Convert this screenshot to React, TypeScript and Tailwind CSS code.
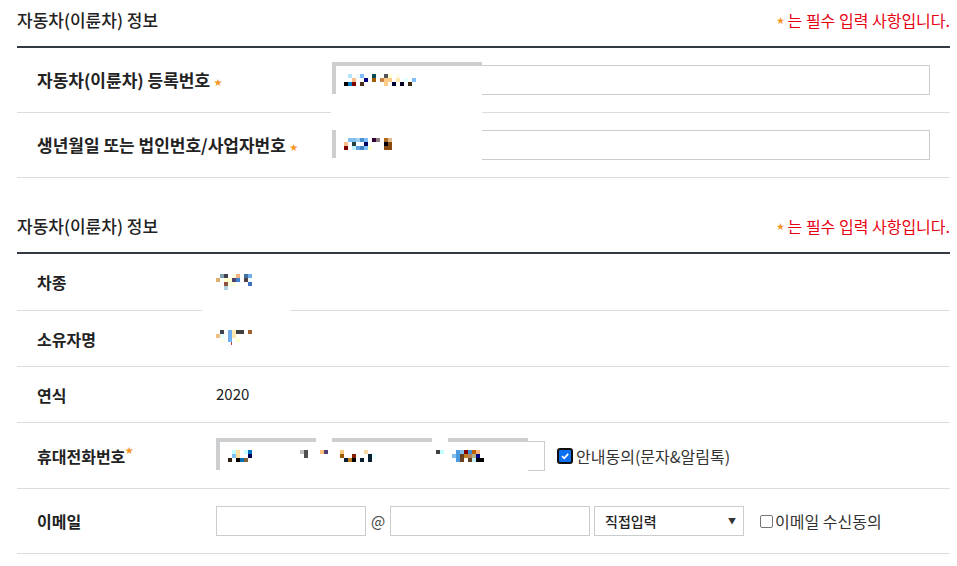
import React from "react";

type Cell = [number, number, string];

// pixelated (masked) personal data, 4px cells
const Pixels = ({ x, y, cells }: { x: number; y: number; cells: Cell[] }) => (
  <>
    {cells.map(([c, r, color], i) => (
      <rect key={i} x={x + c * 4} y={y + r * 4} width={4} height={4} fill={color} />
    ))}
  </>
);

const regCells: Cell[] = [
  [1, 0, "#b3e5fc"], [3, 0, "#eef8ff"], [4, 0, "#7fbfff"], [7, 0, "#0a4a55"], [10, 0, "#555555"], [11, 0, "#ffffd0"], [13, 0, "#fffbe8"],
  [2, 1, "#f5c08a"], [5, 1, "#000080"], [7, 1, "#a05a00"], [9, 1, "#c8843c"], [10, 1, "#ffcc88"], [11, 1, "#ffcc88"], [13, 1, "#ffe8b0"], [15, 1, "#e0ffff"], [17, 1, "#80c0ff"],
  [0, 2, "#000000"], [1, 2, "#0080c0"], [2, 2, "#800000"], [4, 2, "#4a3020"], [10, 2, "#ffcc88"], [12, 2, "#000030"], [14, 2, "#000020"], [16, 2, "#3a2a10"],
];

const birthCells: Cell[] = [
  [1, 0, "#80c0f0"], [2, 0, "#80c0f0"], [3, 0, "#a0d0f0"], [4, 0, "#4a90d0"], [5, 0, "#80c0ff"], [7, 0, "#300030"], [8, 0, "#908080"], [10, 0, "#b06a20"], [11, 0, "#e0c090"],
  [0, 1, "#f5c08a"], [2, 1, "#204040"], [5, 1, "#000060"], [10, 1, "#000010"], [11, 1, "#8a4a10"],
  [0, 2, "#800000"], [2, 2, "#c0f0ff"], [3, 2, "#60a0e0"], [4, 2, "#4080c0"], [5, 2, "#80c0ff"], [6, 2, "#ffffd0"], [10, 2, "#8a4a10"], [11, 2, "#8a4a10"],
];

const carCells: Cell[] = [
  [1, 0, "#80a0b0"], [2, 0, "#404050"], [4, 0, "#ffffe0"], [5, 0, "#f0b080"], [7, 0, "#4070a0"], [8, 0, "#70b0f0"],
  [0, 1, "#e0b070"], [2, 1, "#ffffd0"], [3, 1, "#ffffd0"], [4, 1, "#504070"], [5, 1, "#4080d0"], [7, 1, "#504040"], [8, 1, "#f0ffff"],
  [2, 2, "#905040"], [3, 2, "#ffffe0"], [4, 2, "#ffffe0"], [8, 2, "#4070c0"],
  [2, 3, "#b0d0e0"],
];

const ownerCells: Cell[] = [
  [1, 0, "#404050"], [3, 0, "#70b0f0"], [4, 0, "#ffe8b0"], [5, 0, "#404040"], [6, 0, "#404040"], [8, 0, "#a06030"],
  [0, 1, "#f0c080"], [1, 1, "#e0ffff"], [3, 1, "#70b0f0"], [4, 1, "#ffe8b0"],
  [1, 2, "#fffff0"], [3, 2, "#70b0f0"], [5, 2, "#ffffd0"],
];

const phoneCells: Cell[] = [
  [4, 0, "#c0ffff"], [5, 0, "#ffe0a0"], [7, 0, "#c0ffff"], [8, 0, "#0070c0"],
  [4, 1, "#80c0f0"], [5, 1, "#ffe0a0"], [8, 1, "#000050"],
  [3, 2, "#302010"], [5, 2, "#000000"], [6, 2, "#0070b0"], [7, 2, "#806040"],
  [21, 0, "#c0c0c0"], [22, 0, "#505050"], [22, 1, "#505050"],
  [26, 0, "#ffc080"], [27, 0, "#504070"],
  [31, 0, "#f8c880"], [31, 1, "#a05a00"], [32, 2, "#0a2030"], [33, 2, "#c08020"], [34, 1, "#802000"], [34, 2, "#000000"],
  [36, 2, "#0a2030"], [37, 0, "#f8d8a0"], [38, 1, "#0a2030"], [38, 2, "#0a2030"], [39, 1, "#eaffff"],
  [55, 0, "#404040"], [56, 0, "#c0ffff"],
  [59, 1, "#80c0f0"], [60, 0, "#4a9ae0"], [60, 1, "#4a9ae0"], [60, 2, "#4a9ae0"], [61, 0, "#80c0f0"], [61, 1, "#6a4020"], [61, 2, "#6a4020"],
  [62, 0, "#800000"], [62, 1, "#c08020"], [63, 0, "#4090d0"], [63, 1, "#b08060"], [63, 2, "#604020"],
  [64, 0, "#c06000"], [64, 1, "#b0b080"], [64, 2, "#c0f0ff"], [65, 0, "#f8b880"], [65, 1, "#000080"], [65, 2, "#000000"], [66, 2, "#000000"],
];

const Star = () => <span className="text-[8px] text-[#f7941d] align-middle">★</span>;

const SectionHead = ({ top }: { top: string }) => (
  <div className={`flex justify-between items-start ${top}`}>
    <h2 className="text-[17px] leading-[24px] font-medium text-[#222]">자동차(이륜차) 정보</h2>
    <p className="text-[16px] leading-[24px] text-[#e60012] flex items-center gap-[3px]">
      <Star />
      는 필수 입력 사항입니다.
    </p>
  </div>
);

const Input = ({ className }: { className: string }) => (
  <div className={`h-[30px] border border-[#cccccc] bg-white ${className}`} />
);

export default function App() {
  return (
    <div
      className="w-[957px] h-[566px] bg-white overflow-hidden text-[#222]"
      style={{ fontFamily: '"Noto Sans CJK KR", "Noto Sans", sans-serif' }}
    >
      <div className="ml-[17px] w-[933px]">
        <div className="h-[46px]">
          <SectionHead top="pt-[8px]" />
        </div>
        <div className="h-[2px] bg-[#343a44]" />

        {/* 등록 정보 */}
        <div className="relative">
          <div className="h-[65px] flex items-center border-b border-[#dddddd]">
            <div className="w-[314px] pl-[20px] text-[17px] font-bold">
              자동차(이륜차) 등록번호 <Star />
            </div>
            <Input className="w-[599px]" />
          </div>
          <div className="h-[65px] flex items-center border-b border-[#dddddd]">
            <div className="w-[314px] pl-[20px] text-[17px] font-bold">
              생년월일 또는 법인번호/사업자번호 <Star />
            </div>
            <Input className="w-[599px]" />
          </div>
          <svg className="absolute left-[314px] top-[14px]" width="151" height="114">
            <rect x="0" y="0" width="151" height="114" fill="#fff" />
            <rect x="1" y="0" width="150" height="4" fill="#ccced0" />
            <rect x="1" y="0" width="4" height="32" fill="#ccced0" />
            <rect x="1" y="68" width="4" height="28" fill="#ccced0" />
            <Pixels x={13} y={12} cells={regCells} />
            <Pixels x={13} y={76} cells={birthCells} />
          </svg>
        </div>

        <div className="h-[74px]">
          <SectionHead top="pt-[36px]" />
        </div>
        <div className="h-[2px] bg-[#343a44]" />

        {/* 차량 정보 */}
        <div className="relative">
          <div className="h-[57px] flex items-center border-b border-[#dddddd]">
            <div className="w-[199px] pl-[20px] text-[16px] font-bold">차종</div>
          </div>
          <div className="h-[56px] flex items-center border-b border-[#dddddd]">
            <div className="w-[199px] pl-[20px] text-[16px] font-bold">소유자명</div>
          </div>
          <div className="h-[56px] flex items-center border-b border-[#dddddd]">
            <div className="w-[199px] pl-[20px] text-[16px] font-bold">연식</div>
            <div className="text-[15px]">2020</div>
          </div>
          <div className="h-[66px] flex items-center border-b border-[#dddddd]">
            <div className="w-[199px] pl-[20px] text-[16px] font-bold">
              휴대전화번호<span className="text-[8px] text-[#f7941d] align-top">★</span>
            </div>
            <Input className="w-[99px]" />
            <span className="w-[16px] text-center text-[14px]">-</span>
            <Input className="w-[99px]" />
            <span className="w-[16px] text-center text-[14px]">-</span>
            <Input className="w-[99px]" />
            <label className="ml-[12px] flex items-center gap-[3px] text-[16px] text-[#333]">
              <span className="w-[16px] h-[16px] rounded-[3px] border-2 border-[#101010] bg-[#0b6ff0] flex items-center justify-center">
                <svg width="10" height="10" viewBox="0 0 10 10">
                  <path d="M2 5.2 L4.2 7.3 L8.2 2.8" stroke="#fff" strokeWidth="1.8" fill="none" />
                </svg>
              </span>
              안내동의(문자&알림톡)
            </label>
          </div>
          <div className="h-[65px] flex items-center border-b border-[#dddddd]">
            <div className="w-[199px] pl-[20px] text-[16px] font-bold">이메일</div>
            <Input className="w-[150px]" />
            <span className="w-[24px] text-center text-[15px] text-[#444]">@</span>
            <Input className="w-[200px]" />
            <div className="ml-[4px] w-[150px] h-[30px] border border-[#cccccc] flex items-center justify-between pl-[10px] pr-[7px]">
              <span className="text-[14px] font-medium">직접입력</span>
              <span className="text-[8px] text-[#333]">▼</span>
            </div>
            <label className="ml-[16px] flex items-center gap-[2px] text-[16px] text-[#333]">
              <span className="w-[13px] h-[13px] rounded-[2px] border border-[#767676] bg-white" />
              이메일 수신동의
            </label>
          </div>
          <svg className="absolute left-[185px] top-[8px]" width="88" height="92">
            <rect x="0" y="0" width="88" height="92" fill="#fff" />
            <Pixels x={14} y={12} cells={carCells} />
            <Pixels x={14} y={68} cells={ownerCells} />
            <rect x="29" y="80" width="1" height="3" fill="#c04040" />
          </svg>
          <svg className="absolute left-[199px] top-[184px]" width="312" height="34">
            <rect x="0" y="0" width="312" height="34" fill="#fff" />
            <rect x="0" y="0" width="100" height="4" fill="#ccced0" />
            <rect x="116" y="0" width="100" height="4" fill="#ccced0" />
            <rect x="232" y="0" width="80" height="4" fill="#ccced0" />
            <rect x="0" y="0" width="4" height="32" fill="#ccced0" />
            <Pixels x={0} y={12} cells={phoneCells} />
          </svg>
        </div>
      </div>
    </div>
  );
}
